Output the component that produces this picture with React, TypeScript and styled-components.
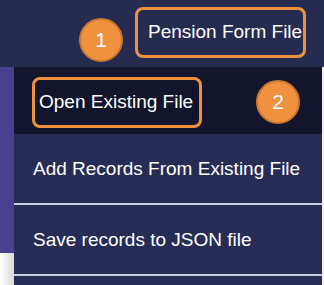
import React from "react";
import styled, { createGlobalStyle } from "styled-components";

const GlobalStyle = createGlobalStyle`
  html, body {
    margin: 0;
    padding: 0;
    background: #f1f1f1;
    font-family: "Liberation Sans", Arial, sans-serif;
  }
`;

const Page = styled.div`
  width: 324px;
  height: 285px;
  overflow: hidden;
  display: flex;
  flex-direction: column;
  background: #f1f1f1;
`;

const Header = styled.div`
  height: 67px;
  flex: none;
  display: flex;
  justify-content: flex-end;
  align-items: flex-start;
  gap: 12px;
  padding: 7px 18px 0 0;
  box-sizing: border-box;
  background: #262b50;
`;

const Badge = styled.div<{ $top: number }>`
  width: 44px;
  height: 44px;
  flex: none;
  margin-top: ${(p) => p.$top}px;
  box-sizing: border-box;
  border-radius: 50%;
  border: 2px solid #c8772f;
  background: #f0913f;
  color: #fff;
  font-size: 21px;
  display: flex;
  align-items: center;
  justify-content: center;
`;

const Highlight = styled.div<{ $width: number }>`
  width: ${(p) => p.$width}px;
  height: 51px;
  box-sizing: border-box;
  border: 3px solid #ee913f;
  border-radius: 8px;
  display: flex;
  align-items: center;
  white-space: nowrap;
  color: #fff;
  font-size: 19px;
`;

const HeaderHighlight = styled(Highlight)`
  padding-left: 10px;
  padding-bottom: 2px;
`;

const Body = styled.div`
  flex: 1;
  display: flex;
`;

const SideStrip = styled.div`
  width: 14px;
  flex: none;
  display: flex;
  flex-direction: column;
`;

const SidePurple = styled.div`
  height: 186px;
  background: #4a3e8e;
`;

const SideLight = styled.div`
  flex: 1;
  background: linear-gradient(to right, #ffffff, #d9d9d9);
`;

const Menu = styled.div`
  width: 308px;
  flex: none;
  display: flex;
  flex-direction: column;
  background: #272c54;
`;

const ActiveItem = styled.div`
  height: 67px;
  flex: none;
  display: flex;
  align-items: center;
  justify-content: space-between;
  padding: 3px 22px 0 18px;
  box-sizing: border-box;
  background: #12152b;
`;

const ActiveHighlight = styled(Highlight)`
  padding-left: 4px;
`;

const Item = styled.div<{ $height: number }>`
  height: ${(p) => p.$height}px;
  flex: none;
  display: flex;
  align-items: center;
  padding-left: 19px;
  box-sizing: border-box;
  color: #fff;
  font-size: 19px;
  white-space: nowrap;
  border-bottom: 2px solid #c9cce0;
`;

export default function App() {
  return (
    <>
      <GlobalStyle />
      <Page>
        <Header>
          <Badge $top={11}>1</Badge>
          <HeaderHighlight $width={171}>Pension Form File</HeaderHighlight>
        </Header>
        <Body>
          <SideStrip>
            <SidePurple />
            <SideLight />
          </SideStrip>
          <Menu>
            <ActiveItem>
              <ActiveHighlight $width={170}>Open Existing File</ActiveHighlight>
              <Badge $top={0}>2</Badge>
            </ActiveItem>
            <Item $height={71}>Add Records From Existing File</Item>
            <Item $height={71}>Save records to JSON file</Item>
          </Menu>
        </Body>
      </Page>
    </>
  );
}
